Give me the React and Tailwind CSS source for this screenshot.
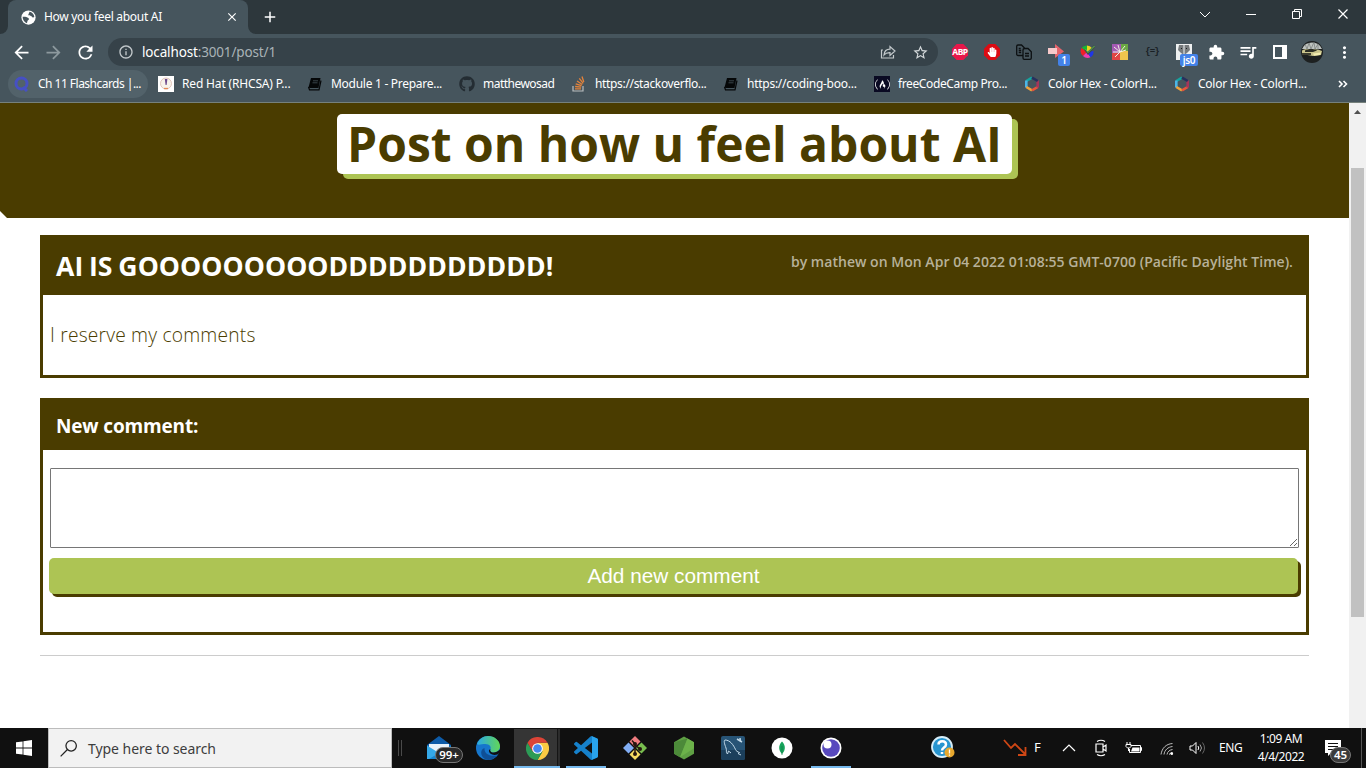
import React from "react";
import {
  MdArrowBack, MdArrowForward, MdRefresh, MdClose, MdAdd, MdInfoOutline, MdStarBorder,
  MdExtension, MdQueueMusic, MdMoreVert,
} from "react-icons/md";
import { FaGithub, FaFreeCodeCamp, FaHandPaper } from "react-icons/fa";

const Book = () => (
  <svg viewBox="0 0 16 16" className="size-4">
    <path d="M4 2h9.500l-2 10H3L1.500 11.500z" fill="#050708" />
    <path d="M6 4.800h5M5.500 6.800h5" fill="none" stroke="#46535a" strokeWidth=".8" />
    <path d="M1.500 11 2.500 13.800h9.500L14 4.500" fill="none" stroke="#050708" strokeWidth="1.200" />
  </svg>
);

const Hexagon = () => (
  <svg viewBox="0 0 16 16" className="size-4" fill="none" strokeWidth="2.600">
    <path d="M8 1.600 2.300 5" stroke="#16a3a0" />
    <path d="M2.300 4.500v7" stroke="#4bb6e8" />
    <path d="M2.300 11 8 14.400" stroke="#f2a33a" />
    <path d="m8 14.400 5.700-3.400" stroke="#e9553b" />
    <path d="M13.700 11.500v-7" stroke="#a6345a" />
    <path d="M13.700 5 8 1.600" stroke="#27305f" />
  </svg>
);

const bookmarks = [
  { label: "Ch 11 Flashcards |...", cell: "w-[142px]", track: "tracking-[-0.52px]", icon: (
    <svg viewBox="0 0 16 16" className="size-4" fill="none" stroke="#4650c4" strokeWidth="3"><circle cx="7.500" cy="7.500" r="5.500" /><path d="m9 11 4 4" /></svg>) },
  { label: "Red Hat (RHCSA) P...", cell: "w-[149px]", track: "tracking-[-0.16px]", icon: (
    <svg viewBox="0 0 16 16" className="size-4"><path fill="#fff" d="M0 0h16v16H0z" /><circle cx="8" cy="7.500" r="5.500" fill="#f7f3ea" stroke="#dcb9ae" strokeWidth=".8" /><path d="M6.800 3h2.600L8.600 9H7.600z" fill="#6e4b8d" /><path d="M6 12.500h4" stroke="#e38a56" strokeWidth="1.300" /></svg>) },
  { label: "Module 1 - Prepare...", cell: "w-[152px]", track: "tracking-[-0.28px]", icon: <Book /> },
  { label: "matthewosad", cell: "w-[112px]", track: "tracking-[-0.52px]", icon: <FaGithub className="size-4 text-[#242d33]" /> },
  { label: "https://stackoverflo...", cell: "w-[152px]", track: "tracking-[-0.34px]", icon: (
    <svg viewBox="0 0 16 16" className="size-4" fill="none"><path d="M2 10v5h10v-5" stroke="#b9bdbe" strokeWidth="1.200" /><path d="M4 12.800h6M4.100 10.500l6.100.7M4.700 7.800l5.900 1.900M6 5l5.300 3.500M8.300 2.300l3.900 5M11 .5l1.800 5.500" stroke="#e5833a" strokeWidth="1.300" /></svg>) },
  { label: "https://coding-boo...", cell: "w-[151px]", track: "tracking-[-0.26px]", icon: <Book /> },
  { label: "freeCodeCamp Pro...", cell: "w-[150px]", track: "tracking-[-0.38px]", icon: (
    <span className="flex size-4 items-center justify-center bg-[#0a0a23]"><FaFreeCodeCamp className="size-[15px] text-white" /></span>) },
  { label: "Color Hex - ColorH...", cell: "w-[150px]", track: "tracking-[-0.24px]", icon: <Hexagon /> },
  { label: "Color Hex - ColorH...", cell: "w-[150px]", track: "tracking-[-0.24px]", icon: <Hexagon /> },
];

const Cell = ({ children }) => (
  <div className="relative flex h-8 w-8 shrink-0 items-center justify-center">{children}</div>
);

function TabStrip() {
  return (
    <div className="flex h-[34px] bg-[#2d373c] pl-2">
      <div className="relative flex w-60 items-center rounded-t-lg bg-[#46555d] pl-3">
        <svg viewBox="0 0 8 8" className="absolute bottom-0 -left-2 size-2" fill="#46555d"><path d="M8 0v8H0a8 8 0 0 0 8-8z" /></svg>
        <svg viewBox="0 0 8 8" className="absolute -right-2 bottom-0 size-2" fill="#46555d"><path d="M0 0v8h8a8 8 0 0 1-8-8z" /></svg>
        <svg viewBox="0 0 16 16" className="ml-px size-[15px]"><circle cx="8" cy="8" r="7.600" fill="#fff" /><path d="M1.800 7.300c2-.3 4.500.2 6 1.300 1.300 1 .7 2-.3 2.400-1 .5-.5 1.700-1.200 3C3.800 13.200 1.600 10.500 1.800 7.300zM9 1.900c2.700.3 5 2.700 5.200 5.600-1 .8-2.400.6-2.800-.7C11 5.800 9 6.500 8 5.600 7.200 4.500 9 3.500 9 1.900z" fill="#46555d" /></svg>
        <span className="ml-2 flex-1 text-[12px] tracking-[-0.3px] whitespace-nowrap text-white">How you feel about AI</span>
        <MdClose className="mr-[9px] size-[14px] text-white" />
      </div>
      <MdAdd className="mt-[8px] ml-[13px] size-[18px] text-white" />
      <div className="ml-auto flex">
        <svg viewBox="0 0 184 30" className="h-[30px] w-[184px]" fill="none" stroke="#fff" strokeWidth="1">
          <path d="m18 12 5 5 5-5" />
          <path d="M64 14.500h10" />
          <path d="M110.500 11.500h7v7h-7zM112.500 11v-1.500h7v7h-2" />
          <path d="m156.500 9.500 9 9m0-9-9 9" strokeWidth="1.200" />
        </svg>
      </div>
    </div>
  );
}

function Toolbar() {
  return (
    <div className="flex h-[36px] items-center bg-[#46555d] text-white">
      <div className="flex w-[108px] items-center gap-[11px] pl-[11px]">
        <MdArrowBack className="size-[21px]" />
        <MdArrowForward className="size-[21px] text-[#8d999e]" />
        <MdRefresh className="size-[21px]" />
      </div>
      <div className="flex h-7 w-[830px] items-center rounded-full bg-[#364249] pr-[2px] pl-[10px]">
        <MdInfoOutline className="size-4 text-[#c3c9cc]" />
        <span className="ml-2 flex-1 text-[13.500px] tracking-[-0.15px] text-[#a9b3b7]"><span className="text-white">localhost</span>:3001/post/1</span>
        <Cell>
          <svg viewBox="0 0 16 16" className="size-4" fill="none" stroke="#c3c9cc" strokeWidth="1.200"><path d="M3 6H1.500v8h12v-3M4 11c.4-4 2.800-5.800 6-5.800V2.500l5 4.500-5 4.500V8.600C7.500 8.500 5.500 9 4 11z" /></svg>
        </Cell>
        <Cell><MdStarBorder className="size-[17px] text-[#d3d8da]" /></Cell>
      </div>
      <div className="ml-[6px] flex items-center">
        <Cell>
          <svg viewBox="0 0 16 16" className="absolute size-4" fill="#e8174a"><path d="M4.700 0h6.600L16 4.700v6.600L11.300 16H4.700L0 11.300V4.700z" /></svg>
          <span className="relative font-['Noto_Sans',sans-serif] text-[8.500px] leading-none font-bold tracking-[-0.5px]">ABP</span>
        </Cell>
        <Cell>
          <svg viewBox="0 0 16 16" className="absolute size-4" fill="#dd0b13"><path d="M4.700 0h6.600L16 4.700v6.600L11.300 16H4.700L0 11.300V4.700z" /></svg>
          <FaHandPaper className="relative size-[10px]" />
        </Cell>
        <Cell>
          <svg viewBox="0 0 16 16" className="size-4" fill="none" stroke="#0c1012" strokeWidth="1.300"><path d="M7 11.500H2A1.300 1.300 0 0 1 .7 10.200V2.300A1.300 1.300 0 0 1 2 1h3.500l3 3M8.500 4.500H12l3.300 3.200V14a1.300 1.300 0 0 1-1.300 1.300H8.300A1.300 1.300 0 0 1 7 14V6a1.500 1.500 0 0 1 1.500-1.500zM2.700 4.500h2M2.700 6.500h2.500M2.700 8.500h2.500M9 9.500h4M9 12h4" /></svg>
        </Cell>
        <Cell>
          <svg viewBox="0 0 16 16" className="size-4"><path d="M0 4h7V0l9 7.500L7 14v-4H0z" fill="#e5646c" /><path d="M0 4h9v6H0z" fill="#f7c9ca" /></svg>
          <span className="absolute top-[18px] left-[18px] flex h-3 w-3 items-center justify-center rounded-[2px] bg-[#4382e8] text-[10px] leading-none font-semibold">1</span>
        </Cell>
        <Cell>
          <svg viewBox="0 0 16 16" className="size-4"><path d="M7 8V1.500A6.500 6.500 0 0 1 12 4z" fill="#e8d51c" /><path d="M7 8 1.500 4A6.500 6.500 0 0 1 7 1.500z" fill="#18b436" /><path d="M7 8 1.500 4A6.500 6.500 0 0 0 3 12z" fill="#f02028" /><path d="m7 8-4 4c2 2 5 2.500 7.500 1.200z" fill="#f03cb0" /><path d="m7 8 3.500 5.200c2-1 3.300-3 3-6.200z" fill="#1f36e8" /><path d="m5 5.500 3 4L14.500 2" fill="none" stroke="#3f4d47" strokeWidth="2" /><path d="m5.500 5 2.500 3.500L14.500 2" fill="none" stroke="#5ee04a" strokeWidth=".8" /></svg>
        </Cell>
        <Cell>
          <svg viewBox="0 0 16 16" className="size-4"><path fill="#a45ab4" d="M0 0h9v9H0z" /><path fill="#6aa843" d="M9 0h7v8H9z" /><path fill="#e14545" d="M0 9h8v7H0z" /><path fill="#f0c64d" d="M8 7h8v9H8z" /><path d="M8 8 6 1M8 8 2 3M8 8l5-6M8 8H1M8 8l-5 5M8 8l6-2" stroke="#f3efe2" /></svg>
        </Cell>
        <Cell><span className="font-['Liberation_Mono',monospace] text-[9px] leading-none font-bold tracking-[-0.9px] text-[#192024]">{"{=}"}</span></Cell>
        <Cell>
          <svg viewBox="0 0 16 16" className="size-4"><path d="M0 0h16v16H0z" fill="#eef0f0" /><path d="M3 1h10l1 5-3 3-3 2-3-2-3-3z" fill="#777b7d" /><path d="M7 1h2v9H7z" fill="#b4b8ba" /><path d="M5 4.500h1M10 4.500h1" stroke="#1c1f20" /></svg>
          <span className="absolute top-[18px] left-[12px] flex h-3 w-[18px] items-center justify-center rounded-[2px] bg-[#4382e8] text-[10px] leading-none font-semibold tracking-[-0.3px]">js0</span>
        </Cell>
        <Cell><MdExtension className="size-[17px]" /></Cell>
        <Cell><MdQueueMusic className="size-[20px]" /></Cell>
        <Cell><span className="h-[14px] w-[14px] border-2 border-r-[5px] border-white" /></Cell>
        <Cell>
          <svg viewBox="0 0 22 22" className="size-[22px]">
            <circle cx="11" cy="11" r="11" fill="#1d2020" />
            <path d="M1 8a11 11 0 0 1 20 0z" fill="#bfc4c0" />
            <path d="m4 3 2 5 2-6 2 6 3-7 1 7 3-5v6" stroke="#727977" fill="none" strokeWidth=".7" />
            <path d="M1 9.500c3-2 14-2 20 .5l-1 4-8 1-11-2z" fill="#c9c48c" />
            <path d="M4 9.500c3-2 9-2 12 0l-4 1.500H4z" fill="#2b2d24" />
            <path d="m12 12.500 8-1-1 2.500-6 .8z" fill="#f4edb0" />
            <path d="M1 13h9" stroke="#3e3e30" strokeWidth="2" />
          </svg>
        </Cell>
        <Cell><MdMoreVert className="size-[19px]" /></Cell>
      </div>
    </div>
  );
}

function Bookmarks() {
  return (
    <div className="flex h-[33px] items-start border-b border-[#76817c] bg-[#46555d] pl-2 text-white">
      {bookmarks.map((b, i) => (
        <div key={i} className={"flex h-7 shrink-0 " + b.cell}>
          <div className={"flex h-7 items-center gap-2 rounded-full " + (i === 0 ? "w-[140px] bg-[#52626a] pl-[6px]" : "pl-2")}>
            <span className="shrink-0">{b.icon}</span>
            <span className={"text-[12px] whitespace-nowrap " + b.track}>{b.label}</span>
          </div>
        </div>
      ))}
      <svg viewBox="0 0 10 8" className="mt-[10px] ml-[22px] h-2 w-[10px]" fill="none" stroke="#fff" strokeWidth="1.600"><path d="m1 1 3 3-3 3M5.500 1l3 3-3 3" /></svg>
    </div>
  );
}

function Page() {
  return (
    <div className="flex h-[625px] bg-white">
      <main className="w-[1349px] font-['Open_Sans',sans-serif]">
        <header className="flex h-[115px] justify-center bg-[#4a3c00] pt-[11px] [clip-path:polygon(0_0,100%_0,100%_100%,7px_100%,0_calc(100%-7px))]">
          <h1 className="flex h-[60px] w-[675px] items-center justify-center rounded-[5px] bg-white text-[48px] leading-none font-bold whitespace-nowrap text-[#4a3c00] shadow-[6px_5px_0_#adc454]">
            Post on how u feel about AI
          </h1>
        </header>
        <div className="px-10 pt-[17px]">
          <section className="h-[143px] border-[3px] border-[#4a3c00]">
            <div className="flex h-[57px] justify-between bg-[#4a3c00] pr-[13px] pl-[13px]">
              <h2 className="pt-[10px] text-[26.600px] leading-[37px] font-bold tracking-[0.05px] [word-spacing:-1.200px] whitespace-nowrap text-white">AI IS GOOOOOOOOODDDDDDDDDDD!</h2>
              <p className="pt-[14px] text-[14px] leading-[20px] font-semibold tracking-[0.03px] whitespace-nowrap text-[#b7b199]">by mathew on Mon Apr 04 2022 01:08:55 GMT-0700 (Pacific Daylight Time).</p>
            </div>
            <p className="pt-[26px] pl-[7px] text-[19.200px] leading-[28px] font-[350] tracking-[0.2px] text-[#4a3c00]">I reserve my comments</p>
          </section>
          <section className="mt-5 h-[237px] border-[3px] border-[#4a3c00]">
            <h3 className="h-[49px] bg-[#4a3c00] pt-[11px] pl-[13px] text-[19px] leading-[28px] font-bold tracking-[-0.15px] text-white">New comment:</h3>
            <div className="flex flex-col px-[7px] pt-[18px]">
              <textarea className="h-20 w-full resize rounded-[1px] border border-[#767676]" />
              <button className="mt-[10px] -ml-px h-9 w-[1249px] rounded-[5px] bg-[#adc454] font-['Liberation_Sans',sans-serif] text-[20.800px] leading-none text-white shadow-[3px_3px_0_#4a3c00]">Add new comment</button>
            </div>
          </section>
          <hr className="mt-5 border-[#ccc]" />
        </div>
      </main>
      <div className="flex w-[17px] flex-col items-center bg-[#f1f1f1]">
        <svg viewBox="0 0 17 17" className="h-[17px] w-[17px]" fill="#505050"><path d="M5 11h7L8.500 7z" /></svg>
        <div className="mt-12 h-[449px] w-[13px] bg-[#c1c1c1]" />
      </div>
    </div>
  );
}

const apps = [
  { icon: (
    <div className="relative">
      <svg viewBox="0 0 24 24" className="size-6"><path d="M0 9 12 0l12 9v4H0z" fill="#0d5ba8" /><path d="M2 8h20v8H2z" fill="#e8f2fa" /><path d="M0 9.500 12 17v6H0z" fill="#35a8e8" /><path d="M24 9.500 12 17 2 23h22z" fill="#1784cf" /></svg>
      <span className="absolute top-[11px] left-[8px] flex h-4 w-7 items-center justify-center rounded-full border border-[#777] bg-[#292929] text-[11.500px] leading-none font-semibold text-white">99+</span>
    </div>) },
  { icon: (
    <svg viewBox="0 0 24 24" className="size-6">
      <defs><linearGradient id="edgeTop" x1="0" x2="1"><stop stopColor="#2aa9e6" /><stop offset="1" stopColor="#62d657" /></linearGradient></defs>
      <circle cx="12" cy="12" r="12" fill="#1676cc" />
      <path d="M1 8C3 3 7 0 12 0c7 0 12 5 12 10 0 4-3 6.500-6.500 6.500-3 0-4-1.500-3-3.500 1-2-1-5-5-5-4 0-7 1.500-8.500 0z" fill="url(#edgeTop)" />
      <path d="M8.500 12c-.5 5 4 9 12.500 7.500C18 23.500 13 25 9 23c-5-2.500-5-10-.5-11z" fill="#0f4f96" />
      <path d="M14.500 13c-.8 1.500 0 3.500 3 3.500 2.300 0 4.300-1 6.500-3v3l-2.500 2c-5 1.500-9-1-8.500-4.500z" fill="#101010" />
    </svg>) },
  { active: true, icon: (
    <svg viewBox="0 0 24 24" className="size-[23px]">
      <path d="M12 12V6h10.400A12 12 0 0 1 12 24l5.200-9z" fill="#fbcb43" />
      <path d="M1.600 6A12 12 0 0 0 12 24l5.200-9H7z" fill="#2c9b56" />
      <path d="M1.600 6A12 12 0 0 1 22.400 6H12l-5 9z" fill="#dc4437" />
      <circle cx="12" cy="12" r="5.600" fill="#fff" /><circle cx="12" cy="12" r="4.500" fill="#4687f0" />
    </svg>) },
  { running: true, icon: (
    <svg viewBox="0 0 24 24" className="size-6"><path d="M23.150 2.587 18.210.210a1.494 1.494 0 0 0-1.705.290l-9.460 8.630-4.120-3.128a.999.999 0 0 0-1.276.057L.327 7.261A1 1 0 0 0 .326 8.740L3.899 12 .326 15.260a1 1 0 0 0 .001 1.479L1.650 17.940a.999.999 0 0 0 1.276.057l4.120-3.128 9.460 8.630a1.492 1.492 0 0 0 1.704.290l4.942-2.377A1.500 1.500 0 0 0 24 20.060V3.939a1.500 1.500 0 0 0-.850-1.352zm-5.146 14.861L10.826 12l7.178-5.448v10.896z" fill="#1681cb" /><path d="m18 .2 5.150 2.387c.5.300.85.700.85 1.352V20c0 .700-.4 1.200-.85 1.400L18 23.800z" fill="#29a3ec" /></svg>) },
  { icon: (
    <svg viewBox="0 0 24 24" className="size-6">
      <path d="m12 0 5.500 5.500L12 11 6.500 5.500z" fill="#f07d80" /><path d="M5.500 6.500 11 12l-5.500 5.500L0 12z" fill="#82aef5" /><path d="m18.500 6.500 5.500 5.500-5.500 5.500L13 12z" fill="#78bd4f" /><path d="m12 13 5.500 5.500L12 24l-5.500-5.500z" fill="#f7dc62" />
      <path d="M9 4.500 12 8v10M12 9l5 4" fill="none" stroke="#26160f" strokeWidth="1.500" /><circle cx="12" cy="8" r="2" fill="#26160f" /><circle cx="12" cy="18" r="2" fill="#26160f" /><circle cx="17" cy="13" r="2" fill="#26160f" />
    </svg>) },
  { icon: (
    <svg viewBox="0 0 24 24" className="size-6"><path d="m12 .5 10 5.800v11.400L12 23.500 2 17.700V6.300z" fill="#5fa044" /><path d="M2 6.300 15.500 2.500 8 21.200 2 17.700z" fill="#4c8a39" /><path d="M15.500 2.500 22 6.300v6L8 21.200z" fill="#6cb24a" /></svg>) },
  { icon: (
    <svg viewBox="0 0 24 24" className="size-6" fill="none"><path d="M2 0h20a2 2 0 0 1 2 2v20a2 2 0 0 1-2 2H2a2 2 0 0 1-2-2V2a2 2 0 0 1 2-2z" fill="#275476" /><path d="M0 14h24v8a2 2 0 0 1-2 2H2a2 2 0 0 1-2-2z" fill="#1c3f5b" /><path d="M6.500 18c-2-1.500-.5-4-1.500-6C3.500 8 2.500 4.500 4 4c5 0 8.500 5 10.500 9.500.7 1.700 2 2.300 4 3l-1.500 1 3 1.500M6.500 18l1-3 2.500 2" stroke="#c3dae9" strokeWidth="1" /><path d="m16 3 5 3M19 2l.5 4" stroke="#c3dae9" strokeWidth="1.500" /></svg>) },
  { icon: (
    <svg viewBox="0 0 24 24" className="size-6"><circle cx="12" cy="12" r="10.500" fill="#fff" /><path d="M12 5.500c4 4 3.500 9 0 12.500-3.500-3.500-4-8.500 0-12.500z" fill="#16a35b" /><path d="M12 10v9" stroke="#0f7c45" strokeWidth=".7" /></svg>) },
  { running: true, icon: (
    <svg viewBox="0 0 24 24" className="size-6"><circle cx="12" cy="12" r="10.500" fill="#fff" /><circle cx="12" cy="12" r="8.800" fill="#5849be" /><circle cx="8.500" cy="8.500" r="4" fill="#fff" /></svg>) },
];

function Taskbar() {
  return (
    <div className="flex h-10 bg-[#101010] text-white">
      <div className="flex w-12 items-center justify-center">
        <svg viewBox="0 0 16 16" className="size-4" fill="#fff"><path d="M0 2.300 6.600 1.400v6.200H0zM7.400 1.300 16 0v7.600H7.400zM0 8.400h6.600v6.200L0 13.700zM7.400 8.400H16V16l-8.600-1.300z" /></svg>
      </div>
      <div className="flex w-[344px] items-center border border-[#bcbcbc] bg-[#f2f2f2] pl-[11px]">
        <svg viewBox="0 0 16 16" className="size-[17px]" fill="none" stroke="#222" strokeWidth="1.200"><circle cx="10.500" cy="5.500" r="4.900" /><path d="M7 9 .6 15.400" /></svg>
        <span className="ml-[11px] text-[14px] tracking-[-0.05px] text-[#3d3d3d]">Type here to search</span>
      </div>
      <div className="mt-3 ml-[6px] h-4 w-1 border-x border-[#4a4a4a]" />
      <div className="ml-[13px] flex">
        {apps.map((a, i) => (
          <div key={i} className="relative flex h-10 w-[49px] items-center justify-center">
            {a.active && (
              <div className="absolute top-px left-[1px] flex h-[39px] w-[46px] border-b-2 border-[#76b9ed] bg-[#353535]">
                <span className="ml-auto w-[3px] border-l border-[#151515] bg-[#2c2c2c]" />
              </div>
            )}
            {a.running && <div className="absolute bottom-0 left-1 h-[2px] w-10 bg-[#76b9ed]" />}
            <div className="relative mr-px">{a.icon}</div>
          </div>
        ))}
      </div>
      <div className="ml-auto flex items-center">
        <svg viewBox="0 0 24 24" className="size-6"><circle cx="11" cy="11" r="10" fill="#2795d0" stroke="#d7eef9" strokeWidth="1.800" /><path d="M7.500 8.500C7.500 4 15 4 15 8.500c0 3-4 3-4 6M11 16v2" stroke="#fff" strokeWidth="2.500" fill="none" /><circle cx="18.500" cy="16.500" r="5" fill="#e8a82e" /><path d="M18.500 13.500v4m0 1v1.200" stroke="#fff" strokeWidth="1.300" /></svg>
        <svg viewBox="0 0 24 18" className="ml-[48px] h-[18px] w-6" fill="none" stroke="#cf4715" strokeWidth="1.800"><path d="m1 1 7 8 4-4 10 10M22.500 8v8H15" /></svg>
        <span className="ml-[7px] w-[9px] text-[13px]">F</span>
        <svg viewBox="0 0 14 8" className="ml-[19px] h-2 w-[14px]" fill="none" stroke="#fff" strokeWidth="1.200"><path d="m1 7 6-6 6 6" /></svg>
        <svg viewBox="0 0 14 18" className="ml-[18px] h-[18px] w-[14px]" fill="none" stroke="#fff" strokeWidth="1.200"><path d="M3 2.500q4-2.500 8 0M3 15.500q4 2.500 8 0M2 5h7v8H2zM9 8l3-2v6l-3-2" /></svg>
        <svg viewBox="0 0 17 16" className="ml-[17px] h-4 w-[17px]" fill="none" stroke="#fff"><path d="M6 5.500h9.500v7H4.500V9" /><path d="M15.500 7.500h1v3h-1M2 2v2M5 2v2M1 4.500h5v2L4.500 8h-2L1 6.500zM3.500 8v3" /><path d="M7.500 7.500h7v4H6z" fill="#fff" stroke="none" /></svg>
        <svg viewBox="0 0 14 14" className="mt-[2px] ml-[18px] size-[14px]" fill="none" stroke="#fff"><path d="M1 12.500C2 6 6 2 12.500 1.500M4 12.500c.5-4.500 4-7.500 8.500-8M7 12.500c.5-3 2.500-4.500 5.500-5" stroke="#bdbdbd" /><path d="M9.500 12.500q.5-2 3-2" /><circle cx="11.800" cy="11.800" r="1.300" fill="#fff" stroke="none" /></svg>
        <svg viewBox="0 0 17 14" className="ml-[15px] h-[14px] w-[17px]" fill="none" stroke="#fff"><path d="M1 5h2.500L7 1.500v11L3.500 9H1zM9 5q1.500 2 0 4" /><path d="M11 3.500q3 3.500 0 7" stroke="#a3a3a3" /><path d="M13.500 1.500q4 5.500 0 11" stroke="#666" /></svg>
        <span className="ml-[13px] w-[25px] text-[12px] tracking-[-0.4px]">ENG</span>
        <div className="ml-[12px] flex w-[50px] flex-col items-center text-[12px] leading-[18px] tracking-[-0.45px] whitespace-nowrap"><span>1:09 AM</span><span>4/4/2022</span></div>
        <div className="relative ml-[19px] h-4 w-[36px]">
          <svg viewBox="0 0 16 16" className="size-4"><path d="M0 0h16v13H6l-3 3v-3H0z" fill="#fff" /><path d="M3 3.500h10M3 6.500h10M3 9.500h7" stroke="#101010" /></svg>
          <span className="absolute top-[7px] left-[5px] flex h-4 w-[21px] items-center justify-center rounded-full border border-[#777] bg-[#3b3b3b] text-[11.500px] leading-none font-semibold">45</span>
        </div>
        <div className="mr-1 h-10 w-px bg-[#555]" />
      </div>
    </div>
  );
}

export default function App() {
  return (
    <div className="h-[768px] w-[1366px] overflow-hidden bg-white font-['Noto_Sans','Open_Sans',sans-serif]">
      <TabStrip />
      <Toolbar />
      <Bookmarks />
      <Page />
      <Taskbar />
    </div>
  );
}
